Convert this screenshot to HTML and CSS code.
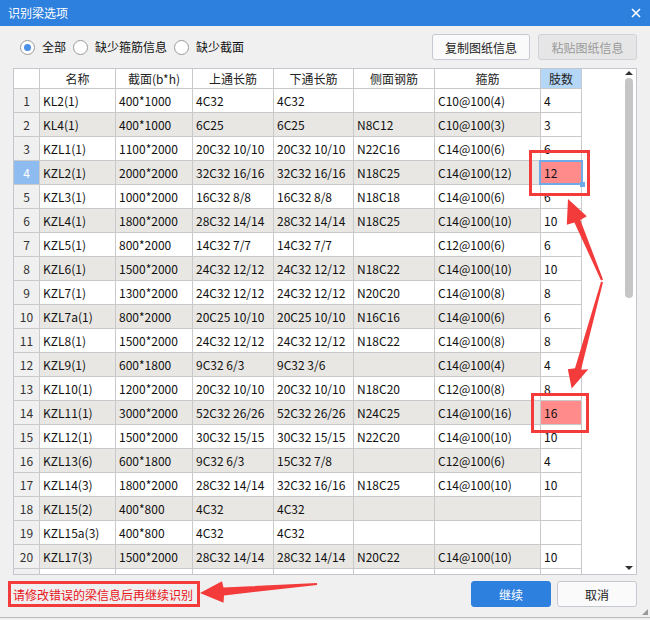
FILE: index.html
```html
<!DOCTYPE html>
<html lang="zh">
<head>
<meta charset="utf-8">
<title>识别梁选项</title>
<link rel="stylesheet" href="styles.css">
</head>
<body>
<div class="dialog">
  <div class="titlebar">
    <span class="title">识别梁选项</span>
    <svg class="close" width="10" height="10" viewBox="0 0 10 10"><path d="M1 1L9 9M9 1L1 9" stroke="#fff" stroke-width="1.6" fill="none"/></svg>
  </div>

  <div class="toolbar">
    <label class="radio on"><span class="dot"></span>全部</label>
    <label class="radio"><span class="dot"></span>缺少箍筋信息</label>
    <label class="radio"><span class="dot"></span>缺少截面</label>
    <span class="spacer"></span>
    <button class="btn">复制图纸信息</button>
    <button class="btn disabled">粘贴图纸信息</button>
  </div>

  <div class="gridwrap">
    <div class="grid">
      <div class="row head"><div class="c num"></div><div class="c">名称</div><div class="c">截面(b*h)</div><div class="c">上通长筋</div><div class="c">下通长筋</div><div class="c">侧面钢筋</div><div class="c">箍筋</div><div class="c last hl">肢数</div></div>
      <div class="row"><div class="c num">1</div><div class="c">KL2(1)</div><div class="c">400*1000</div><div class="c">4C32</div><div class="c">4C32</div><div class="c"></div><div class="c">C10@100(4)</div><div class="c last">4</div></div>
      <div class="row alt"><div class="c num">2</div><div class="c">KL4(1)</div><div class="c">400*1000</div><div class="c">6C25</div><div class="c">6C25</div><div class="c">N8C12</div><div class="c">C10@100(3)</div><div class="c last">3</div></div>
      <div class="row"><div class="c num">3</div><div class="c">KZL1(1)</div><div class="c">1100*2000</div><div class="c">20C32 10/10</div><div class="c">20C32 10/10</div><div class="c">N22C16</div><div class="c">C14@100(6)</div><div class="c last">6</div></div>
      <div class="row alt"><div class="c num sel">4</div><div class="c">KZL2(1)</div><div class="c">2000*2000</div><div class="c">32C32 16/16</div><div class="c">32C32 16/16</div><div class="c">N18C25</div><div class="c">C14@100(12)</div><div class="c last err cur">12</div></div>
      <div class="row"><div class="c num">5</div><div class="c">KZL3(1)</div><div class="c">1000*2000</div><div class="c">16C32 8/8</div><div class="c">16C32 8/8</div><div class="c">N18C18</div><div class="c">C14@100(6)</div><div class="c last">6</div></div>
      <div class="row alt"><div class="c num">6</div><div class="c">KZL4(1)</div><div class="c">1800*2000</div><div class="c">28C32 14/14</div><div class="c">28C32 14/14</div><div class="c">N18C25</div><div class="c">C14@100(10)</div><div class="c last">10</div></div>
      <div class="row"><div class="c num">7</div><div class="c">KZL5(1)</div><div class="c">800*2000</div><div class="c">14C32 7/7</div><div class="c">14C32 7/7</div><div class="c"></div><div class="c">C12@100(6)</div><div class="c last">6</div></div>
      <div class="row alt"><div class="c num">8</div><div class="c">KZL6(1)</div><div class="c">1500*2000</div><div class="c">24C32 12/12</div><div class="c">24C32 12/12</div><div class="c">N18C22</div><div class="c">C14@100(10)</div><div class="c last">10</div></div>
      <div class="row"><div class="c num">9</div><div class="c">KZL7(1)</div><div class="c">1300*2000</div><div class="c">24C32 12/12</div><div class="c">24C32 12/12</div><div class="c">N20C20</div><div class="c">C14@100(8)</div><div class="c last">8</div></div>
      <div class="row alt"><div class="c num">10</div><div class="c">KZL7a(1)</div><div class="c">800*2000</div><div class="c">20C25 10/10</div><div class="c">20C25 10/10</div><div class="c">N16C16</div><div class="c">C14@100(6)</div><div class="c last">6</div></div>
      <div class="row"><div class="c num">11</div><div class="c">KZL8(1)</div><div class="c">1500*2000</div><div class="c">24C32 12/12</div><div class="c">24C32 12/12</div><div class="c">N18C22</div><div class="c">C14@100(8)</div><div class="c last">8</div></div>
      <div class="row alt"><div class="c num">12</div><div class="c">KZL9(1)</div><div class="c">600*1800</div><div class="c">9C32 6/3</div><div class="c">9C32 3/6</div><div class="c"></div><div class="c">C14@100(4)</div><div class="c last">4</div></div>
      <div class="row"><div class="c num">13</div><div class="c">KZL10(1)</div><div class="c">1200*2000</div><div class="c">20C32 10/10</div><div class="c">20C32 10/10</div><div class="c">N18C20</div><div class="c">C12@100(8)</div><div class="c last">8</div></div>
      <div class="row alt"><div class="c num">14</div><div class="c">KZL11(1)</div><div class="c">3000*2000</div><div class="c">52C32 26/26</div><div class="c">52C32 26/26</div><div class="c">N24C25</div><div class="c">C14@100(16)</div><div class="c last err">16</div></div>
      <div class="row"><div class="c num">15</div><div class="c">KZL12(1)</div><div class="c">1500*2000</div><div class="c">30C32 15/15</div><div class="c">30C32 15/15</div><div class="c">N22C20</div><div class="c">C14@100(10)</div><div class="c last">10</div></div>
      <div class="row alt"><div class="c num">16</div><div class="c">KZL13(6)</div><div class="c">600*1800</div><div class="c">9C32 6/3</div><div class="c">15C32 7/8</div><div class="c"></div><div class="c">C12@100(6)</div><div class="c last">4</div></div>
      <div class="row"><div class="c num">17</div><div class="c">KZL14(3)</div><div class="c">1800*2000</div><div class="c">28C32 14/14</div><div class="c">32C32 16/16</div><div class="c">N18C25</div><div class="c">C14@100(10)</div><div class="c last">10</div></div>
      <div class="row alt"><div class="c num">18</div><div class="c">KZL15(2)</div><div class="c">400*800</div><div class="c">4C32</div><div class="c">4C32</div><div class="c"></div><div class="c"></div><div class="c last"></div></div>
      <div class="row"><div class="c num">19</div><div class="c">KZL15a(3)</div><div class="c">400*800</div><div class="c">4C32</div><div class="c">4C32</div><div class="c"></div><div class="c"></div><div class="c last"></div></div>
      <div class="row alt"><div class="c num">20</div><div class="c">KZL17(3)</div><div class="c">1500*2000</div><div class="c">28C32 14/14</div><div class="c">28C32 14/14</div><div class="c">N20C22</div><div class="c">C14@100(10)</div><div class="c last">10</div></div>
      <div class="row"><div class="c num"></div><div class="c"></div><div class="c"></div><div class="c"></div><div class="c"></div><div class="c"></div><div class="c"></div><div class="c last"></div></div>
    </div>
    <div class="filler"></div>
    <div class="vscroll">
      <span class="arrow up"></span>
      <span class="thumb"></span>
      <span class="track"></span>
      <span class="arrow down"></span>
    </div>
  </div>

  <div class="footer">
    <span class="msg">请修改错误的梁信息后再继续识别</span>
    <span class="spacer"></span>
    <button class="btn primary">继续</button>
    <button class="btn">取消</button>
  </div>
  <span class="grip"></span>

  <div class="mark mark1"></div>
  <div class="mark mark2"></div>
  <div class="mark mark3"></div>
  <svg class="arrows" width="650" height="620" viewBox="0 0 650 620">
    <polygon fill="#f43b3b" points="603,279.6 580.3,219.9 586.8,216.3 568,199 566.8,224.7 574.4,222.4 601,280.4"/>
    <polygon fill="#f43b3b" points="603,282.3 581,369.8 588.3,369.3 571.7,388.6 567.8,369.3 575,368.2 601,281.7"/>
    <polygon fill="#f43b3b" points="317,582.9 223.5,587.6 222,581.3 200,593 223.5,602.7 224,595.4 317,585"/>
  </svg>
</div>
</body>
</html>
```

FILE: styles.css
```css
* { box-sizing: border-box; }
html, body { margin: 0; padding: 0; background: #f0f0f0; }
body {
  font-family: "Microsoft YaHei", "Noto Sans CJK SC", sans-serif;
  font-size: 12px;
  color: #111;
}
.dialog {
  position: relative;
  width: 650px;
  height: 618px;
  background: #f0f0f0;
  border-bottom: 1px solid #b9b9b9;
  display: flex;
  flex-direction: column;
}
.titlebar {
  height: 26px;
  background: #2e80de;
  color: #fff;
  display: flex;
  align-items: center;
  justify-content: space-between;
  padding: 0 9px 0 8px;
}
.title { font-size: 12px; line-height: 26px; }
.close { display: block; }

.toolbar {
  margin-top: 8px;
  height: 26px;
  display: flex;
  align-items: center;
  padding: 0 13px 0 20px;
}
.radio {
  display: flex;
  align-items: center;
  gap: 7px;
  margin-right: 7px;
  line-height: 16px;
  color: #111;
}
.dot {
  width: 15px;
  height: 15px;
  border-radius: 50%;
  border: 1px solid #9a9a9a;
  background: #fff;
  display: flex;
  align-items: center;
  justify-content: center;
}
.radio.on .dot::after {
  content: "";
  width: 7px;
  height: 7px;
  border-radius: 50%;
  background: #4a90e6;
}
.spacer { flex: 1; }
.btn {
  font: inherit;
  height: 26px;
  width: 98px;
  border: 1px solid #c5c9d1;
  border-radius: 3px;
  background: #fafafa;
  color: #222;
  padding: 0;
  margin-left: 8px;
}
.btn.disabled { background: #e6e6e6; color: #9a9a9a; border-color: #cfd2d8; width: 99px; }

.gridwrap {
  margin: 8px 13px 0 13px;
  height: 507px;
  border: 1px solid #c3c6cc;
  background: #fff;
  display: flex;
  overflow: hidden;
}
.grid { width: 568px; flex: none; }
.row {
  display: grid;
  grid-template-columns: 26px 76px 77px 81px 80px 81px 106px 41px;
  height: 24px;
}
.c {
  border-right: 1px solid #c9c9cc;
  border-bottom: 1px solid #c9c9cc;
  padding: 0 3px;
  line-height: 23px;
  white-space: nowrap;
  overflow: hidden;
  background: #fff;
}
.row.alt .c { background: #e8e7e3; }
.row .c.num { background: #f0f0f0; text-align: center; color: #333; padding: 0; }
.row .c.last { background: #fff; }
.row.head { height: 20px; }
.row.head .c { line-height: 19px; text-align: center; background: #fff; color: #222; }
.row.head .c.hl { background: #b4d6f7; }
.row .c.num.sel { background: #8ebcf1; color: #fff; }
.row .c.err { background: #ff8b8b; }
.cur { position: relative; overflow: visible; }
.cur::after {
  content: "";
  position: absolute;
  left: -2px; top: -1px; right: -2px; bottom: -1px;
  border: 2px solid #6ea9e8;
}
.cur::before {
  content: "";
  position: absolute;
  right: -4px; bottom: -3px;
  width: 5px; height: 5px;
  background: #6ea9e8;
  z-index: 1;
}
.filler { flex: 1; }
.vscroll {
  width: 15px;
  flex: none;
  display: flex;
  flex-direction: column;
  align-items: center;
  padding: 2px 0 4px;
}
.arrow { width: 0; height: 0; border-left: 4px solid transparent; border-right: 4px solid transparent; }
.arrow.up { border-bottom: 4px solid #333; }
.arrow.down { border-top: 4px solid #333; }
.thumb {
  margin-top: 3px;
  width: 8px;
  height: 220px;
  border-radius: 4px;
  background: #c6c6c6;
}
.track { flex: 1; }

.footer {
  margin-top: 6px;
  height: 26px;
  display: flex;
  align-items: center;
  padding: 0 13px 0 13px;
}
.msg { color: #e8141a; font-size: 12px; }
.btn.primary { background: #2e80de; border-color: #2e80de; color: #fff; width: 80px; margin-left: 0; }
.footer .btn { width: 80px; margin-left: 6px; }
.footer .btn.primary { margin-left: 0; }

.grip {
  position: absolute;
  right: 2px; bottom: 2px;
  width: 6px; height: 6px;
  background: radial-gradient(circle, #999 0.8px, transparent 1px) 0 0 / 2px 2px;
  clip-path: polygon(100% 0, 100% 100%, 0 100%);
}
.mark { position: absolute; border: 3px solid #f43b3b; }
.mark1 { left: 529px; top: 150px; width: 61px; height: 46px; }
.mark2 { left: 531px; top: 393px; width: 58px; height: 40px; }
.mark3 { left: 8px; top: 581px; width: 192px; height: 26px; }
.arrows { position: absolute; left: 0; top: 0; pointer-events: none; }
```
